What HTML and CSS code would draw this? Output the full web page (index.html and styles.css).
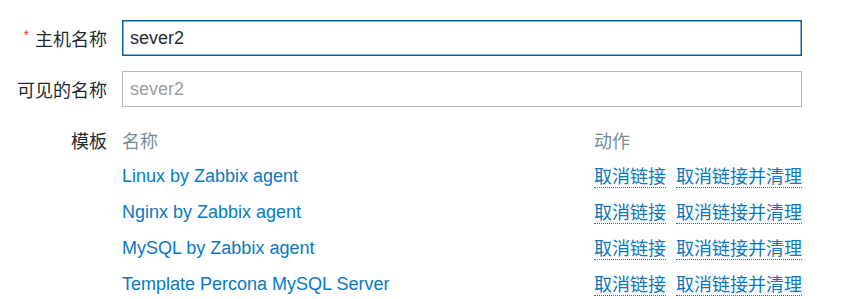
FILE: index.html
```html
<!DOCTYPE html>
<html lang="zh">
<head>
<meta charset="utf-8">
<link rel="stylesheet" href="styles.css">
</head>
<body>
<form class="form">
  <div class="row">
    <label class="label"><span class="req">*</span><span>主机名称</span></label>
    <div class="field"><input class="input input-focus" type="text" value="sever2"></div>
  </div>
  <div class="row">
    <label class="label"><span>可见的名称</span></label>
    <div class="field"><input class="input" type="text" placeholder="sever2"></div>
  </div>
  <div class="row row-top">
    <label class="label"><span>模板</span></label>
    <div class="field">
      <div class="tpl">
        <div class="th">名称</div>
        <div class="th">动作</div>
        <a class="name" href="#">Linux by Zabbix agent</a>
        <div class="acts"><a class="act" href="#">取消链接</a><a class="act" href="#">取消链接并清理</a></div>
        <a class="name" href="#">Nginx by Zabbix agent</a>
        <div class="acts"><a class="act" href="#">取消链接</a><a class="act" href="#">取消链接并清理</a></div>
        <a class="name" href="#">MySQL by Zabbix agent</a>
        <div class="acts"><a class="act" href="#">取消链接</a><a class="act" href="#">取消链接并清理</a></div>
        <a class="name" href="#">Template Percona MySQL Server</a>
        <div class="acts"><a class="act" href="#">取消链接</a><a class="act" href="#">取消链接并清理</a></div>
      </div>
    </div>
  </div>
</form>
</body>
</html>
```

FILE: styles.css
```css
html, body {
  margin: 0;
  padding: 0;
  background: #ffffff;
}
body {
  font-family: "Liberation Sans", Arial, "Noto Sans CJK SC", sans-serif;
  font-size: 18px;
  color: #1f2c33;
}
.form {
  display: flex;
  flex-direction: column;
  gap: 15px;
  padding-top: 20px;
}
.row {
  display: grid;
  grid-template-columns: 107px 680px;
  column-gap: 15px;
  align-items: center;
}
.row-top {
  align-items: start;
}
.label {
  display: flex;
  justify-content: flex-end;
  align-items: center;
  height: 36px;
  white-space: nowrap;
}
.req {
  color: #e33734;
  font-size: 14px;
  margin-right: 6px;
  margin-top: -6px;
}
.input {
  display: block;
  box-sizing: border-box;
  width: 680px;
  height: 36px;
  margin: 0;
  padding: 0 7px;
  border: 1px solid #acbbc2;
  font-family: inherit;
  font-size: 18px;
  color: #1f2c33;
  background: #fff;
  outline: none;
}
.input-focus {
  border: 1px solid #00629f;
  box-shadow: inset 0 0 0 0.5px #00629f;
}
.input::placeholder {
  color: #9a9ea1;
  opacity: 1;
}
.tpl {
  display: grid;
  grid-template-columns: 1fr auto;
  grid-auto-rows: 36px;
  align-items: center;
}
.th {
  color: #768d99;
}
.name {
  color: #0a78bf;
  text-decoration: none;
  justify-self: start;
}
.acts {
  display: flex;
  align-items: center;
  gap: 10px;
}
.act {
  display: block;
  line-height: 20px;
  color: #0a78bf;
  text-decoration: none;
  border-bottom: 1px dotted #0a78bf;
  margin-bottom: -2px;
}
```
